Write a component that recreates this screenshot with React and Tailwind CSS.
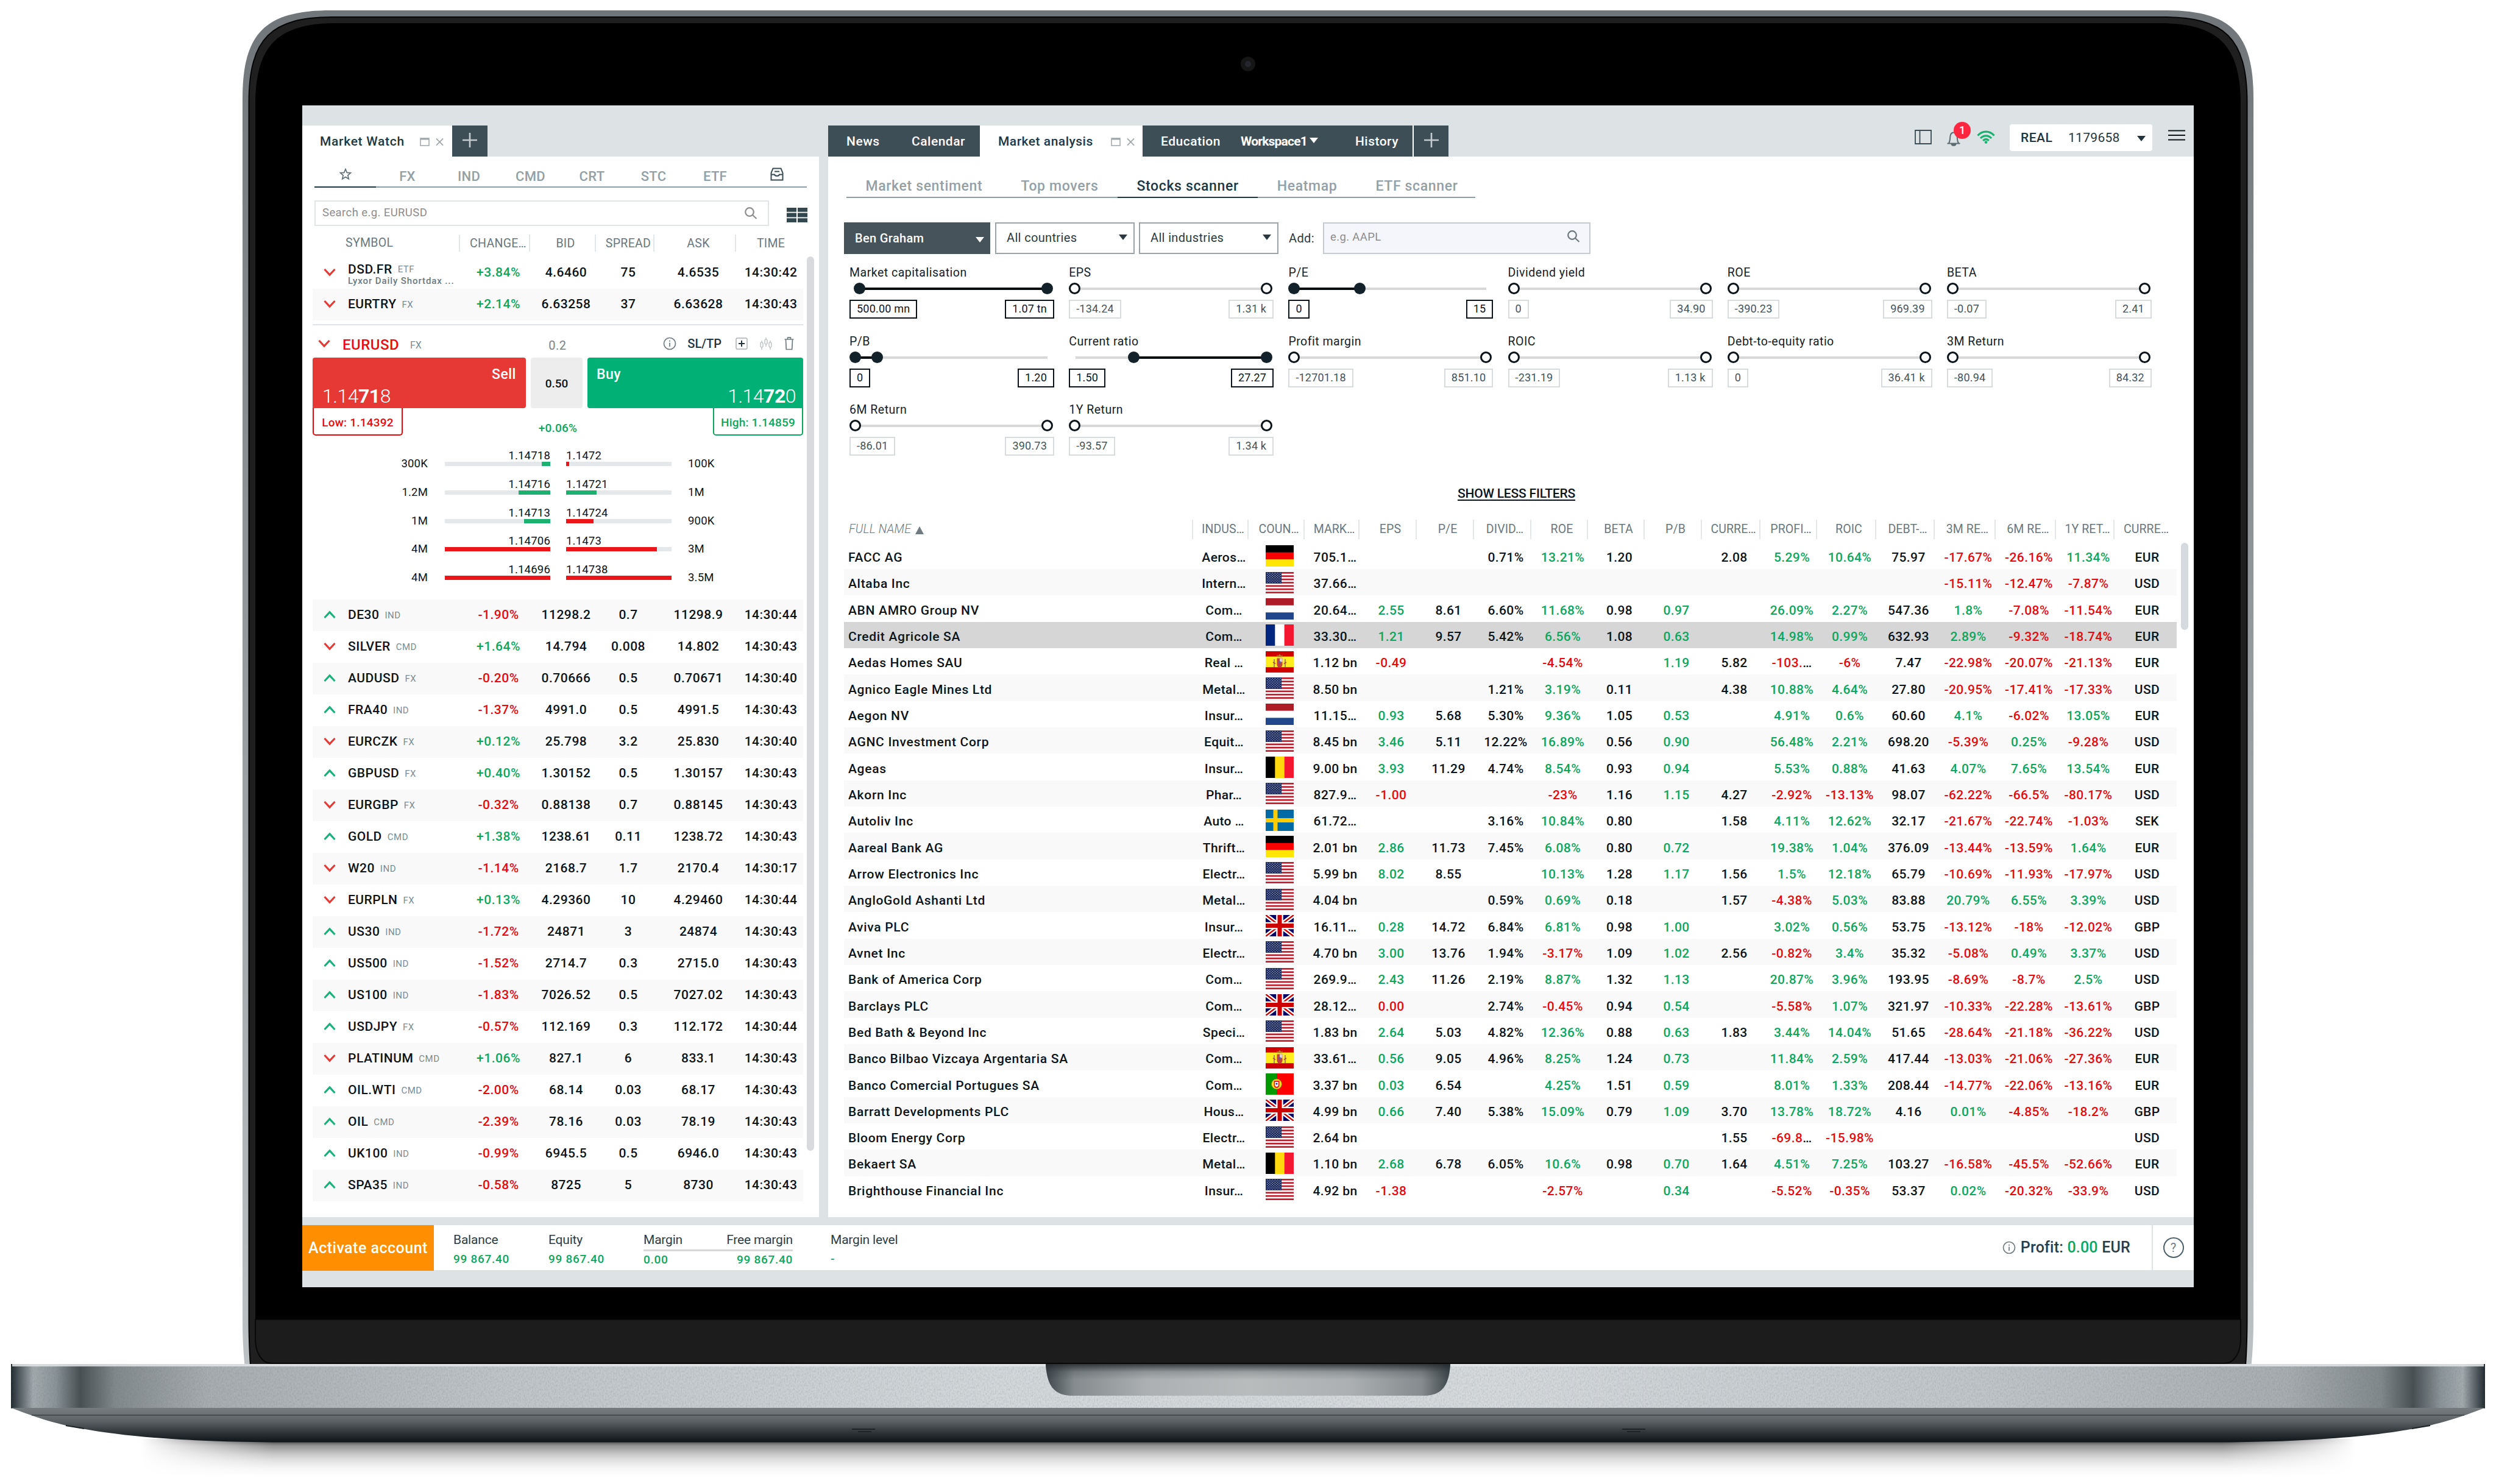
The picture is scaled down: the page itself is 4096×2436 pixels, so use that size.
const symbols = [
  ["up", "DE30", "IND", "-1.90%", "11298.2", "0.7", "11298.9", "14:30:44"],
  ["down", "SILVER", "CMD", "+1.64%", "14.794", "0.008", "14.802", "14:30:43"],
  ["up", "AUDUSD", "FX", "-0.20%", "0.70666", "0.5", "0.70671", "14:30:40"],
  ["up", "FRA40", "IND", "-1.37%", "4991.0", "0.5", "4991.5", "14:30:43"],
  ["down", "EURCZK", "FX", "+0.12%", "25.798", "3.2", "25.830", "14:30:40"],
  ["up", "GBPUSD", "FX", "+0.40%", "1.30152", "0.5", "1.30157", "14:30:43"],
  ["down", "EURGBP", "FX", "-0.32%", "0.88138", "0.7", "0.88145", "14:30:43"],
  ["up", "GOLD", "CMD", "+1.38%", "1238.61", "0.11", "1238.72", "14:30:43"],
  ["down", "W20", "IND", "-1.14%", "2168.7", "1.7", "2170.4", "14:30:17"],
  ["down", "EURPLN", "FX", "+0.13%", "4.29360", "10", "4.29460", "14:30:44"],
  ["up", "US30", "IND", "-1.72%", "24871", "3", "24874", "14:30:43"],
  ["up", "US500", "IND", "-1.52%", "2714.7", "0.3", "2715.0", "14:30:43"],
  ["up", "US100", "IND", "-1.83%", "7026.52", "0.5", "7027.02", "14:30:43"],
  ["up", "USDJPY", "FX", "-0.57%", "112.169", "0.3", "112.172", "14:30:44"],
  ["down", "PLATINUM", "CMD", "+1.06%", "827.1", "6", "833.1", "14:30:43"],
  ["up", "OIL.WTI", "CMD", "-2.00%", "68.14", "0.03", "68.17", "14:30:43"],
  ["up", "OIL", "CMD", "-2.39%", "78.16", "0.03", "78.19", "14:30:43"],
  ["up", "UK100", "IND", "-0.99%", "6945.5", "0.5", "6946.0", "14:30:43"],
  ["up", "SPA35", "IND", "-0.58%", "8725", "5", "8730", "14:30:43"],
];

const depth = [
  { bidVol: "300K", bid: "1.14718", bidPct: 8.3, bidGreen: true, ask: "1.1472", askPct: 3, askGreen: false, askVol: "100K" },
  { bidVol: "1.2M", bid: "1.14716", bidPct: 30, bidGreen: true, ask: "1.14721", askPct: 29, askGreen: true, askVol: "1M" },
  { bidVol: "1M", bid: "1.14713", bidPct: 25, bidGreen: true, ask: "1.14724", askPct: 26, askGreen: false, askVol: "900K" },
  { bidVol: "4M", bid: "1.14706", bidPct: 100, bidGreen: false, ask: "1.1473", askPct: 86, askGreen: false, askVol: "3M" },
  { bidVol: "4M", bid: "1.14696", bidPct: 100, bidGreen: false, ask: "1.14738", askPct: 100, askGreen: false, askVol: "3.5M" },
];

const filters = [
  { label: "Market capitalisation", min: "500.00 mn", max: "1.07 tn", low: 16.7, high: 324.5, active: true },
  { label: "EPS", min: "-134.24", max: "1.31 k", low: 9.5, high: 324.5 },
  { label: "P/E", min: "0", max: "15", low: 9.5, high: 117.5, active: true },
  { label: "Dividend yield", min: "0", max: "34.90", low: 9.5, high: 324.5 },
  { label: "ROE", min: "-390.23", max: "969.39", low: 9.5, high: 324.5 },
  { label: "BETA", min: "-0.07", max: "2.41", low: 9.5, high: 324.5 },
  { label: "P/B", min: "0", max: "1.20", low: 9.5, high: 45, active: true },
  { label: "Current ratio", min: "1.50", max: "27.27", low: 106.5, high: 324.5, active: true },
  { label: "Profit margin", min: "-12701.18", max: "851.10", low: 9.5, high: 324.5 },
  { label: "ROIC", min: "-231.19", max: "1.13 k", low: 9.5, high: 324.5 },
  { label: "Debt-to-equity ratio", min: "0", max: "36.41 k", low: 9.5, high: 324.5 },
  { label: "3M Return", min: "-80.94", max: "84.32", low: 9.5, high: 324.5 },
  { label: "6M Return", min: "-86.01", max: "390.73", low: 9.5, high: 324.5 },
  { label: "1Y Return", min: "-93.57", max: "1.34 k", low: 9.5, high: 324.5 },
];

const stockHeaders = ["INDUS…", "COUN…", "MARK…", "EPS", "P/E", "DIVID…", "ROE", "BETA", "P/B", "CURRE…", "PROFI…", "ROIC", "DEBT-…", "3M RE…", "6M RE…", "1Y RET…", "CURRE…"];

// name, industry, country, cap, eps, p/e, dividend, roe, beta, p/b, current, profit, roic, debt, 3m, 6m, 1y, currency
const stocks = [
  ["FACC AG", "Aeros…", "de", "705.1…", "", "", "0.71%", "13.21%", "1.20", "", "2.08", "5.29%", "10.64%", "75.97", "-17.67%", "-26.16%", "11.34%", "EUR"],
  ["Altaba Inc", "Intern…", "us", "37.66…", "", "", "", "", "", "", "", "", "", "", "-15.11%", "-12.47%", "-7.87%", "USD"],
  ["ABN AMRO Group NV", "Com…", "nl", "20.64…", "2.55", "8.61", "6.60%", "11.68%", "0.98", "0.97", "", "26.09%", "2.27%", "547.36", "1.8%", "-7.08%", "-11.54%", "EUR"],
  ["Credit Agricole SA", "Com…", "fr", "33.30…", "1.21", "9.57", "5.42%", "6.56%", "1.08", "0.63", "", "14.98%", "0.99%", "632.93", "2.89%", "-9.32%", "-18.74%", "EUR"],
  ["Aedas Homes SAU", "Real …", "es", "1.12 bn", "-0.49", "", "", "-4.54%", "", "1.19", "5.82", "-103.…", "-6%", "7.47", "-22.98%", "-20.07%", "-21.13%", "EUR"],
  ["Agnico Eagle Mines Ltd", "Metal…", "us", "8.50 bn", "", "", "1.21%", "3.19%", "0.11", "", "4.38", "10.88%", "4.64%", "27.80", "-20.95%", "-17.41%", "-17.33%", "USD"],
  ["Aegon NV", "Insur…", "nl", "11.15…", "0.93", "5.68", "5.30%", "9.36%", "1.05", "0.53", "", "4.91%", "0.6%", "60.60", "4.1%", "-6.02%", "13.05%", "EUR"],
  ["AGNC Investment Corp", "Equit…", "us", "8.45 bn", "3.46", "5.11", "12.22%", "16.89%", "0.56", "0.90", "", "56.48%", "2.21%", "698.20", "-5.39%", "0.25%", "-9.28%", "USD"],
  ["Ageas", "Insur…", "be", "9.00 bn", "3.93", "11.29", "4.74%", "8.54%", "0.93", "0.94", "", "5.53%", "0.88%", "41.63", "4.07%", "7.65%", "13.54%", "EUR"],
  ["Akorn Inc", "Phar…", "us", "827.9…", "-1.00", "", "", "-23%", "1.16", "1.15", "4.27", "-2.92%", "-13.13%", "98.07", "-62.22%", "-66.5%", "-80.17%", "USD"],
  ["Autoliv Inc", "Auto …", "se", "61.72…", "", "", "3.16%", "10.84%", "0.80", "", "1.58", "4.11%", "12.62%", "32.17", "-21.67%", "-22.74%", "-1.03%", "SEK"],
  ["Aareal Bank AG", "Thrift…", "de", "2.01 bn", "2.86", "11.73", "7.45%", "6.08%", "0.80", "0.72", "", "19.38%", "1.04%", "376.09", "-13.44%", "-13.59%", "1.64%", "EUR"],
  ["Arrow Electronics Inc", "Electr…", "us", "5.99 bn", "8.02", "8.55", "", "10.13%", "1.28", "1.17", "1.56", "1.5%", "12.18%", "65.79", "-10.69%", "-11.93%", "-17.97%", "USD"],
  ["AngloGold Ashanti Ltd", "Metal…", "us", "4.04 bn", "", "", "0.59%", "0.69%", "0.18", "", "1.57", "-4.38%", "5.03%", "83.88", "20.79%", "6.55%", "3.39%", "USD"],
  ["Aviva PLC", "Insur…", "gb", "16.11…", "0.28", "14.72", "6.84%", "6.81%", "0.98", "1.00", "", "3.02%", "0.56%", "53.75", "-13.12%", "-18%", "-12.02%", "GBP"],
  ["Avnet Inc", "Electr…", "us", "4.70 bn", "3.00", "13.76", "1.94%", "-3.17%", "1.09", "1.02", "2.56", "-0.82%", "3.4%", "35.32", "-5.08%", "0.49%", "3.37%", "USD"],
  ["Bank of America Corp", "Com…", "us", "269.9…", "2.43", "11.26", "2.19%", "8.87%", "1.32", "1.13", "", "20.87%", "3.96%", "193.95", "-8.69%", "-8.7%", "2.5%", "USD"],
  ["Barclays PLC", "Com…", "gb", "28.12…", "0.00", "", "2.74%", "-0.45%", "0.94", "0.54", "", "-5.58%", "1.07%", "321.97", "-10.33%", "-22.28%", "-13.61%", "GBP"],
  ["Bed Bath & Beyond Inc", "Speci…", "us", "1.83 bn", "2.64", "5.03", "4.82%", "12.36%", "0.88", "0.63", "1.83", "3.44%", "14.04%", "51.65", "-28.64%", "-21.18%", "-36.22%", "USD"],
  ["Banco Bilbao Vizcaya Argentaria SA", "Com…", "es", "33.61…", "0.56", "9.05", "4.96%", "8.25%", "1.24", "0.73", "", "11.84%", "2.59%", "417.44", "-13.03%", "-21.06%", "-27.36%", "EUR"],
  ["Banco Comercial Portugues SA", "Com…", "pt", "3.37 bn", "0.03", "6.54", "", "4.25%", "1.51", "0.59", "", "8.01%", "1.33%", "208.44", "-14.77%", "-22.06%", "-13.16%", "EUR"],
  ["Barratt Developments PLC", "Hous…", "gb", "4.99 bn", "0.66", "7.40", "5.38%", "15.09%", "0.79", "1.09", "3.70", "13.78%", "18.72%", "4.16", "0.01%", "-4.85%", "-18.2%", "GBP"],
  ["Bloom Energy Corp", "Electr…", "us", "2.64 bn", "", "", "", "", "", "", "1.55", "-69.8…", "-15.98%", "", "", "", "", "USD"],
  ["Bekaert SA", "Metal…", "be", "1.10 bn", "2.68", "6.78", "6.05%", "10.6%", "0.98", "0.70", "1.64", "4.51%", "7.25%", "103.27", "-16.58%", "-45.5%", "-52.66%", "EUR"],
  ["Brighthouse Financial Inc", "Insur…", "us", "4.92 bn", "-1.38", "", "", "-2.57%", "", "0.34", "", "-5.52%", "-0.35%", "53.37", "0.02%", "-20.32%", "-33.9%", "USD"],
];

// columns of a stock row whose figures are red or green
const signedColumns = [4, 7, 9, 11, 12, 14, 15, 16];

const FlagArt = ({ code }) => {
  if (code === "de") {
    return (
      <>
        <rect width="46" height="12" fill="#000" />
        <rect y="11.7" width="46" height="12" fill="#f00" />
        <rect y="23.3" width="46" height="11.7" fill="#ffe600" />
      </>
    );
  }
  if (code === "nl") {
    return (
      <>
        <rect width="46" height="35" fill="#fff" />
        <rect width="46" height="11.7" fill="#ae1c28" />
        <rect y="23.3" width="46" height="11.7" fill="#21468b" />
      </>
    );
  }
  if (code === "fr" || code === "be") {
    const [a, b] = code === "fr" ? ["#00267f", "#fff"] : ["#000", "#ffd90c"];
    return (
      <>
        <rect width="16" height="35" fill={a} />
        <rect x="15.3" width="15.4" height="35" fill={b} />
        <rect x="30.7" width="15.3" height="35" fill="#f31830" />
      </>
    );
  }
  if (code === "se") {
    return (
      <>
        <rect width="46" height="35" fill="#006aa7" />
        <rect x="12.5" width="7" height="35" fill="#fecc00" />
        <rect y="14" width="46" height="7" fill="#fecc00" />
      </>
    );
  }
  if (code === "es") {
    return (
      <>
        <rect width="46" height="35" fill="#d00000" />
        <rect y="8.7" width="46" height="17.5" fill="#ffed1f" />
        <path d="M19 9.500h8l1-3.500-2.500 1.500L23 4.500l-2.500 3L18 6z" fill="#b8772a" />
        <path d="M18.500 11.500h9v10.500a4.500 4.500 0 0 1-9 0z" fill="#c3403f" />
        <path d="M23 11.500h4.500v6H23z" fill="#d9cfd6" />
        <circle cx="23" cy="18" r="1.800" fill="#4a63b8" />
        <path d="M13 13h2v13h-2zM31 13h2v13h-2z" fill="#a98a5a" />
        <path d="M12 18l4 2.500M34 18l-4 2.500" stroke="#c3403f" strokeWidth="1.500" />
      </>
    );
  }
  if (code === "pt") {
    return (
      <>
        <rect width="46" height="35" fill="#f00" />
        <rect width="18" height="35" fill="#090" />
        <circle cx="18" cy="17.500" r="8.500" fill="#f5e21c" stroke="#7d7a10" strokeWidth="1" />
        <path d="M13.500 12h9v7.500a4.500 4.500 0 0 1-9 0z" fill="#f01c1c" />
        <path d="M15.300 14h5.400v5a2.700 2.700 0 0 1-5.400 0z" fill="#fff" />
        <circle cx="18" cy="17" r="1.500" fill="#1a2e9a" />
      </>
    );
  }
  if (code === "gb") {
    return (
      <>
        <rect width="46" height="35" fill="#006" />
        <path d="M0 0L46 35M46 0L0 35" stroke="#fff" strokeWidth="7" />
        <path d="M0 0L46 35M46 0L0 35" stroke="#c00" strokeWidth="2.400" />
        <path d="M23 0V35M0 17.500H46" stroke="#fff" strokeWidth="11.500" />
        <path d="M23 0V35M0 17.500H46" stroke="#c00" strokeWidth="7" />
      </>
    );
  }
  return (
    <>
      <rect width="46" height="35" fill="#fff" />
      {[0, 1, 2, 3, 4, 5, 6].map((i) => (
        <rect key={i} y={i * 5.38} width="46" height="2.69" fill="#bd1d2c" />
      ))}
      <rect width="26" height="18.800" fill="#1d2c63" />
      {[0, 1, 2, 3, 4, 5, 6, 7, 8].map((r) => (
        <path
          key={r}
          d={r % 2 ? `M4.200 ${1.9 + r * 1.88}H24` : `M2 ${1.9 + r * 1.88}H25`}
          stroke="#c5cbe0"
          strokeWidth="1.100"
          strokeDasharray="1.100 3.200"
        />
      ))}
    </>
  );
};

const Flag = ({ code }) => (
  <svg viewBox="0 0 46 35" className="w-[46px] h-[35px] block">
    <FlagArt code={code} />
  </svg>
);

const Chevron = ({ dir }) => (
  <svg viewBox="0 0 20 14" className="w-[20px] h-[14px] -mt-[2px]" fill="none" strokeWidth="3.200">
    {dir === "up" ? <path d="M1.500 12L10 2.800l8.500 9.200" stroke="#17b27a" /> : <path d="M1.500 2L10 11.200 18.500 2" stroke="#e53a36" />}
  </svg>
);

const Magnifier = () => (
  <svg viewBox="0 0 24 22" className="w-[24px] h-[22px]" fill="none" stroke="currentColor" strokeWidth="2.200">
    <circle cx="10" cy="9" r="6.800" />
    <path d="M15 14l6.500 6" />
  </svg>
);

const WindowControls = () => (
  <div className="flex items-center gap-[10px] text-[#9fa6aa]">
    <svg viewBox="0 0 16 14" className="w-[16px] h-[14px]" fill="none" stroke="currentColor" strokeWidth="1.500">
      <rect x="1" y="1" width="14" height="12" />
      <path d="M1 2.200h14" strokeWidth="2.500" />
    </svg>
    <svg viewBox="0 0 14 14" className="w-[13px] h-[14px]" fill="none" stroke="currentColor" strokeWidth="1.800">
      <path d="M1 1l12 12M13 1L1 13" />
    </svg>
  </div>
);

const AddTab = ({ className }) => (
  <div className={`bg-[#3e4e57] h-[51px] flex justify-center pt-[12px] ${className}`}>
    <svg viewBox="0 0 24 24" className="w-[24px] h-[24px]" stroke="#c5cccf" strokeWidth="2.600">
      <path d="M12 0v24M0 12h24" />
    </svg>
  </div>
);

const Caret = ({ className }) => (
  <svg viewBox="0 0 14 9" className={`w-[14px] h-[9px] ${className}`} fill="currentColor">
    <path d="M0 0h14L7 9z" />
  </svg>
);

const InfoIcon = () => (
  <svg viewBox="0 0 22 22" className="w-[22px] h-[22px]" fill="none" stroke="#6f7c82" strokeWidth="1.700">
    <circle cx="11" cy="11" r="9.500" />
    <path d="M11 9.500v6.500M11 5.800v2" />
  </svg>
);

const SymbolRow = ({ row, striped }) => {
  const [dir, name, type, change, bid, spread, ask, time] = row;
  return (
    <div className={`w-[805px] h-[52px] grid grid-cols-[255px_100px_122px_82px_148px_98px] items-center text-center text-[21px] font-medium tracking-[0.5px] ${striped ? "bg-[#f9f9f9]" : ""}`}>
      <div className="flex items-center pl-[18px]">
        <Chevron dir={dir} />
        <span className="ml-[20px]">{name}</span>
        <span className="ml-[9px] mt-px text-[15px] font-normal text-[#7b8c94]">{type}</span>
      </div>
      <div className={change[0] === "-" ? "text-[#e8090e]" : "text-[#0ca75e]"}>{change}</div>
      <div>{bid}</div>
      <div>{spread}</div>
      <div>{ask}</div>
      <div className="pr-[8px]">{time}</div>
    </div>
  );
};

const DepthRow = ({ row }) => (
  <div className="flex h-[46.8px] text-[18.5px] tracking-[0.2px] leading-[20px]">
    <div className="w-[189px] pt-[13px] text-right">{row.bidVol}</div>
    <div className="w-[173px] ml-[28px]">
      <div className="h-[20px] text-right">{row.bid}</div>
      <div className="h-[7px] bg-[#e4e8eb] flex justify-end">
        <div className={`h-full ${row.bidGreen ? "bg-[#1cb171]" : "bg-[#ec151a]"}`} style={{ width: `${row.bidPct}%` }} />
      </div>
    </div>
    <div className="w-[173px] ml-[26px]">
      <div className="h-[20px]">{row.ask}</div>
      <div className="h-[7px] bg-[#e4e8eb]">
        <div className={`h-full ${row.askGreen ? "bg-[#1cb171]" : "bg-[#ec151a]"}`} style={{ width: `${row.askPct}%` }} />
      </div>
    </div>
    <div className="ml-[27px] pt-[13px]">{row.askVol}</div>
  </div>
);

const OrderTicket = () => (
  <div className="w-[805px]">
    <div className="mt-[6px] h-[2px] bg-[#dfe4ea]" />
    <div className="flex items-center h-[53px] pt-[9px] pl-[9px]">
      <Chevron dir="down" />
      <span className="ml-[20px] mt-px w-[111px] text-[24px] font-medium tracking-[0.5px] text-[#ee0a0f]">EURUSD</span>
      <span className="mt-[4px] w-[204px] text-[16px] text-[#7b8c94]">FX</span>
      <span className="mt-[4px] w-[76px] text-center text-[20px] tracking-[0.5px] text-[#788489]">0.2</span>
      <div className="ml-auto -mt-[2px] pr-[15px] flex items-center">
        <InfoIcon />
        <span className="ml-[18px] text-[20px] font-medium text-[#22343d]">SL/TP</span>
        <svg viewBox="0 0 20 20" className="ml-[23px] w-[20px] h-[20px]" fill="none">
          <rect x="1" y="1" width="18" height="18" rx="2" stroke="#aab3b7" strokeWidth="1.500" />
          <path d="M10 5v10M5 10h10" stroke="#22343d" strokeWidth="2" />
        </svg>
        <svg viewBox="0 0 22 22" className="ml-[19px] w-[22px] h-[22px]" fill="none" stroke="#c0c6c9" strokeWidth="1.500">
          <path d="M4 6v3M4 17v4M11 1v3M11 12v4M18 6v3M18 17v4" />
          <rect x="2" y="9" width="4" height="8" rx="2" />
          <rect x="9" y="4" width="4" height="8" rx="2" />
          <rect x="16" y="9" width="4" height="8" rx="2" />
        </svg>
        <svg viewBox="0 0 16 22" className="ml-[19px] w-[16px] h-[22px]" fill="none" stroke="#6f7c82" strokeWidth="1.700">
          <path d="M0.500 4h15M5.500 3.500V1.200h5v2.300M2.500 4.500l.8 16h9.400l.8-16" />
        </svg>
      </div>
    </div>
    <div className="flex gap-[8px] h-[83px]">
      <div className="w-[350px] bg-[#e63835] rounded-t-[4px] rounded-br-[4px] text-white px-[16px] pt-[12px]">
        <div className="h-[30px] leading-[32px] text-right text-[23px] tracking-[0.5px] font-medium">Sell</div>
        <div className="h-[38px] leading-[42px] text-[32px] font-light tracking-[-0.5px]">1.14<b className="font-bold">71</b>8</div>
      </div>
      <div className="w-[85px] bg-[#ededed] rounded-[4px] flex items-center justify-center pt-[4px] text-[19px] font-medium">0.50</div>
      <div className="w-[354px] bg-[#00b074] rounded-t-[4px] rounded-bl-[4px] text-white px-[12px] pt-[12px]">
        <div className="h-[30px] leading-[32px] text-[23px] tracking-[0.5px] font-medium pl-[3px]">Buy</div>
        <div className="h-[38px] leading-[42px] text-right text-[32px] font-light tracking-[-0.5px]">1.14<b className="font-bold">72</b>0</div>
      </div>
    </div>
    <div className="flex justify-between h-[45px] text-[19px] font-medium tracking-[0.2px]">
      <div className="w-[148px] border-2 border-t-0 border-[#e8090e] rounded-b-[5px] text-[#e8090e] flex items-center justify-center pt-[6px]">Low: 1.14392</div>
      <div className="pt-[19px] text-[#0ca75e]">+0.06%</div>
      <div className="w-[148px] border-2 border-t-0 border-[#0ca75e] rounded-b-[5px] text-[#0ca75e] flex items-center justify-center pt-[6px]">High: 1.14859</div>
    </div>
    <div className="mt-[23px] mb-[12px]">
      {depth.map((row) => (
        <DepthRow key={row.bid} row={row} />
      ))}
    </div>
  </div>
);

const MarketWatch = () => (
  <section className="w-[848px] flex flex-col">
    <div className="flex pt-[33px]">
      <div className="bg-white w-[246px] h-[51px] flex items-center pt-[3px] pl-[29px]">
        <span className="w-[164px] text-[21px] font-medium tracking-[0.7px] text-[#213844]">Market Watch</span>
        <WindowControls />
      </div>
      <AddTab className="w-[58px]" />
    </div>
    <div className="bg-white h-[1741px]">
      <div className="mx-[20px] w-[808px] h-[51px] border-b-2 border-[#8ea0a7] grid grid-cols-8 text-center text-[22px] font-medium tracking-[0.3px] text-[#93a0a6]">
        <div className="border-b-2 border-[#1d3743] h-[51px] flex justify-center pt-[18px]">
          <svg viewBox="0 0 22 22" className="w-[20px] h-[22px]" fill="none" stroke="#5d6e77" strokeWidth="1.800">
            <path d="M11 1.800l2.600 6.300 6.700.5-5.100 4.400 1.600 6.600L11 16l-5.800 3.600 1.600-6.600L1.700 8.600l6.700-.5z" />
          </svg>
        </div>
        {["FX", "IND", "CMD", "CRT", "STC", "ETF"].map((name) => (
          <div key={name} className="pt-[16px] pl-[2px]">{name}</div>
        ))}
        <div className="flex justify-center pt-[18px] pl-[3px]">
          <svg viewBox="0 0 22 22" className="w-[22px] h-[22px]" fill="none" stroke="#3b4c55" strokeWidth="2">
            <path d="M4.500 1.500h13L20.500 9v11.500h-19V9zM1.500 11.500h5.500c.5 3 7.500 3 8 0h5.500M7 6.500h8" />
          </svg>
        </div>
      </div>
      <div className="flex items-center mt-[21px] ml-[20px]">
        <div className="w-[746px] h-[42px] border-2 border-[#e2e5e7] flex items-center justify-between pl-[11px] pr-[16px] text-[18.5px] tracking-[0.4px] text-[#8c8c8c]">
          <span>Search e.g. EURUSD</span>
          <Magnifier />
        </div>
        <svg viewBox="0 0 34 24" className="ml-[29px] mt-[6px] w-[34px] h-[24px]" fill="#33474f">
          <path d="M0 0h16v6.800H0zM18 0h16v6.800H18zM0 8.600h16v6.800H0zM18 8.600h16v6.800H18zM0 17.200h16V24H0zM18 17.200h16V24H18z" />
        </svg>
      </div>
      <div className="mt-[13px] ml-[17px] w-[805px] h-[28px] grid grid-cols-[240px_115px_108px_96px_134px_112px] items-center text-center text-[19.5px] tracking-[0.3px] leading-[30px] text-[#69787f]">
        <div className="text-left pl-[54px]">SYMBOL</div>
        <div className="h-[28px] border-l-2 border-[#e3e7ea] pl-[12px]">CHANGE…</div>
        <div className="h-[28px] border-l-2 border-[#e3e7ea] pl-[10px]">BID</div>
        <div className="h-[28px] border-l-2 border-[#e3e7ea] pl-[12px]">SPREAD</div>
        <div className="h-[28px] border-l-2 border-[#e3e7ea] pl-[12px]">ASK</div>
        <div className="h-[28px] border-l-2 border-[#e3e7ea] pl-[4px]">TIME</div>
      </div>
      <div className="flex mt-[9px] ml-[17px]">
        <div>
          <div className="w-[805px] h-[53px] grid grid-cols-[255px_100px_122px_82px_148px_98px] items-center text-center text-[21px] font-medium tracking-[0.5px]">
            <div className="flex items-center pl-[18px]">
              <Chevron dir="down" />
              <div className="ml-[20px] text-left leading-none pt-[5px]">
                <div className="flex items-center">
                  DSD.FR <span className="ml-[9px] mt-px text-[15px] font-normal text-[#7b8c94]">ETF</span>
                </div>
                <div className="text-[15px] tracking-[0.9px] leading-[16px] whitespace-nowrap text-[#6b7a82]">Lyxor Daily Shortdax ...</div>
              </div>
            </div>
            <div className="text-[#0ca75e]">+3.84%</div>
            <div>4.6460</div>
            <div>75</div>
            <div>4.6535</div>
            <div className="pr-[8px]">14:30:42</div>
          </div>
          <SymbolRow row={["down", "EURTRY", "FX", "+2.14%", "6.63258", "37", "6.63628", "14:30:43"]} striped />
          <OrderTicket />
          {symbols.map((row, i) => (
            <SymbolRow key={row[1]} row={row} striped={i % 2 === 0} />
          ))}
        </div>
        <div className="ml-[6px] w-[12px] h-[1468px] rounded-full bg-[#d8dadd]" />
      </div>
    </div>
  </section>
);

const RangeFilter = ({ label, min, max, low, high, active }) => {
  const knob = active ? "bg-[#13212b]" : "bg-white border-[3.500px] border-[#0b141b]";
  const box = active ? "border-[#0b141b] text-[#0b141b]" : "border-[#d9dcde] text-[#44535b]";
  return (
    <div className="w-[336px] h-[112.600px]">
      <div className="h-[24px] leading-[22px] text-[19.5px] tracking-[0.5px]">{label}</div>
      <div className="relative h-[24px]">
        <div className="absolute left-[11px] top-[11px] w-[314px] h-[4px] bg-[#d8d8d8]" />
        {active && <div className="absolute top-[11px] h-[4px] bg-[#04090d]" style={{ left: low, width: high - low }} />}
        <div className={`absolute top-[3px] w-[19px] h-[19px] rounded-full ${knob}`} style={{ left: low - 9.5 }} />
        <div className={`absolute top-[3px] w-[19px] h-[19px] rounded-full ${knob}`} style={{ left: high - 9.5 }} />
      </div>
      <div className="mt-[7px] flex justify-between text-[18px] tracking-[0.2px] leading-[26px]">
        <div className={`h-[31px] border-2 px-[10px] ${box}`}>{min}</div>
        <div className={`h-[31px] border-2 px-[10px] ${box}`}>{max}</div>
      </div>
    </div>
  );
};

const StockCell = ({ value, signed }) => {
  if (!signed) return <div>{value}</div>;
  const color = value[0] === "-" || value === "0.00" ? "text-[#e8090e]" : "text-[#0ca75e]";
  return (
    <div>
      <span className={color}>{value.replace("…", "")}</span>
      {value.endsWith("…") && "…"}
    </div>
  );
};

const StockTable = () => (
  <div className="ml-[26px] mt-[28px]">
    <div className="w-[2187px] h-[28px] grid grid-cols-[571px_91px_92px_90px_94px_94px_94px_93px_93px_94px_96px_93px_97px_96px_100px_99px_96px_104px] text-center text-[19.5px] tracking-[0.1px] leading-[32px] whitespace-nowrap text-[#69787f]">
      <div className="text-left pl-[8px] flex items-center gap-[7px] italic font-light tracking-[0.2px]">
        FULL NAME
        <svg viewBox="0 0 14 13" className="w-[14px] h-[13px] mt-[3px]" fill="#707c82">
          <path d="M7 0l7 13H0z" />
        </svg>
      </div>
      {stockHeaders.map((name, i) => (
        <div key={i} className={`border-l-2 border-[#e3e7ea] flex justify-center ${i === 16 ? "pl-[2px]" : "pl-[9px]"}`}>{name}</div>
      ))}
    </div>
    <div className="flex mt-[10px]">
      <div>
        {stocks.map((row, i) => (
          <div
            key={row[0]}
            className={`w-[2187px] h-[43.340px] pt-[5px] grid grid-cols-[578px_91px_92px_90px_94px_94px_94px_93px_93px_94px_96px_93px_97px_96px_100px_99px_96px_97px] items-center text-center text-[21px] leading-[30px] font-medium tracking-[0.4px] whitespace-nowrap ${i === 3 ? "bg-[#d6d6d6]" : i % 2 ? "bg-[#f9f9f9]" : ""}`}
          >
            {row.map((value, c) => {
              if (c === 0) return <div key={c} className="text-left pl-[7px] tracking-[0.7px]">{value}</div>;
              if (c === 2) return <div key={c} className="flex justify-center -mt-[4px]"><Flag code={value} /></div>;
              return <StockCell key={c} value={value} signed={signedColumns.includes(c) && value !== ""} />;
            })}
          </div>
        ))}
      </div>
      <div className="ml-[7px] w-[12px] h-[143px] rounded-full bg-[#d5dade]" />
    </div>
  </div>
);

const TopBar = () => (
  <div className="flex pt-[33px] text-[21px] font-medium tracking-[0.5px] text-white whitespace-nowrap">
    <div className="bg-[#3e4e57] w-[249px] h-[51px] flex items-center pt-[3px]">
      <span className="w-[107px] ml-[30px]">News</span>
      <span>Calendar</span>
    </div>
    <div className="bg-white w-[267px] h-[51px] flex items-center pt-[3px] pl-[30px] text-[#213844]">
      <span className="w-[185px]">Market analysis</span>
      <WindowControls />
    </div>
    <div className="bg-[#3e4e57] w-[443px] h-[51px] flex items-center pt-[3px]">
      <span className="w-[131px] ml-[30px]">Education</span>
      <span className="font-bold tracking-[-0.8px]">Workspace1</span>
      <Caret className="ml-[4px] -mt-[6px]" />
      <span className="ml-auto mr-[23px]">History</span>
    </div>
    <AddTab className="w-[59px] border-l-2 border-white" />
    <div className="ml-auto h-[48px] -mt-[4px] flex items-center text-[#22343d]">
      <svg viewBox="0 0 28 24" className="w-[28px] h-[24px] -mt-[2px]" fill="none" stroke="#3b4c55" strokeWidth="1.800">
        <path d="M1 1h26v22H1zM8.500 1v22" />
      </svg>
      <div className="relative ml-[24px]">
        <svg viewBox="0 0 24 26" className="w-[24px] h-[26px] mt-[2px]" fill="none" stroke="#5d6b72" strokeWidth="2">
          <path d="M1.500 21.500h21M4 21c2-3 2-5 2.200-10C6.500 6 8.500 3.500 12 3.500s5.500 2.500 5.800 7.500c.2 5 .2 7 2.200 10" />
          <path d="M8.500 22.500c.5 3 6.500 3 7 0z" fill="#5d6b72" />
        </svg>
        <div className="absolute left-[12px] -top-[12px] w-[28px] h-[28px] rounded-full bg-[#ff2740] text-white text-[18px] leading-[28px] text-center tracking-normal">1</div>
      </div>
      <svg viewBox="0 0 30 22" className="ml-[26px] -mt-[2px] w-[30px] h-[22px]" fill="none" stroke="#17b26f" strokeWidth="3.200">
        <path d="M1.500 8.500c7.500-8.500 19.500-8.500 27 0M6 13c5-5.600 13-5.600 18 0M10.200 16.800c3-3 6.600-3 9.600 0" />
        <circle cx="15" cy="19.500" r="2.300" fill="#17b26f" stroke="none" />
      </svg>
      <div className="ml-[24px] bg-white rounded-[4px] w-[234px] h-[44px] flex items-center pt-[2px] pl-[18px] pr-[11px]">
        <span className="w-[78px]">REAL</span>
        <span className="font-normal tracking-[0.3px]">1179658</span>
        <Caret className="ml-auto" />
      </div>
      <svg viewBox="0 0 28 18" className="ml-[26px] mr-[14px] -mt-[9px] w-[28px] h-[18px]" stroke="#0e1519" strokeWidth="2.200">
        <path d="M0 1.500h28M0 9h28M0 16.500h28" />
      </svg>
    </div>
  </div>
);

const MarketAnalysis = () => (
  <section className="w-[2241px] ml-[15px] flex flex-col">
    <TopBar />
    <div className="bg-white h-[1741px]">
      <div className="ml-[30px] w-[1032px] h-[68px] border-b-2 border-[#8ea0a7] flex text-[23px] font-medium tracking-[0.650px] whitespace-nowrap text-[#93a0a6]">
        {["Market sentiment", "Top movers", "Stocks scanner", "Heatmap", "ETF scanner"].map((name) => (
          <div key={name} className={`h-[68px] pt-[32px] px-[31.500px] ${name === "Stocks scanner" ? "border-b-2 border-[#1d3743] text-[#1d3743]" : ""}`}>{name}</div>
        ))}
      </div>
      <div className="flex mt-[40px] ml-[26px] h-[52px] text-[20px] tracking-[0.350px] text-[#2b3a42]">
        <div className="w-[240px] bg-[#46535b] text-white font-medium flex items-center justify-between pl-[18px] pr-[10px]">
          Ben Graham
          <Caret className="mt-[5px]" />
        </div>
        <div className="w-[229px] ml-[8px] border-2 border-[#99a3a8] flex items-center justify-between pl-[17px] pr-[10px] pb-[2px]">
          All countries
          <Caret className="-mt-[2px]" />
        </div>
        <div className="w-[229px] ml-[7px] border-2 border-[#99a3a8] flex items-center justify-between pl-[17px] pr-[10px] pb-[2px]">
          All industries
          <Caret className="-mt-[2px]" />
        </div>
        <div className="w-[73px] pl-[17px] leading-[52px]">Add:</div>
        <div className="w-[439px] bg-[#f5f6fb] border-2 border-[#c5cbd1] flex items-center justify-between pl-[10px] pr-[14px] pb-[2px] text-[18.500px] text-[#8c8c8c]">
          e.g. AAPL
          <div className="text-[#6b777d] -mt-[4px]"><Magnifier /></div>
        </div>
      </div>
      <div className="mt-[20px] ml-[35px] grid grid-cols-[repeat(6,360.200px)] text-[#14222a]">
        {filters.map((filter) => (
          <RangeFilter key={filter.label} {...filter} />
        ))}
      </div>
      <div className="mt-[21px] h-[29px] leading-[28px] text-center pl-[18px] text-[21px] font-medium tracking-[-0.200px] underline underline-offset-[3px]">SHOW LESS FILTERS</div>
      <StockTable />
    </div>
  </section>
);

const Footer = () => (
  <footer className="h-[74px] bg-white flex text-[#2d3d46]">
    <div className="w-[216px] h-[75px] bg-[#ff8f00] text-white text-[25px] font-medium tracking-[0.5px] flex items-center justify-center pt-[1px] whitespace-nowrap">Activate account</div>
    <div className="ml-[32px] w-[156px] pt-[9px]">
      <div className="text-[21px] tracking-[-0.2px] leading-[30px]">Balance</div>
      <div className="text-[19px] leading-[34px] font-medium tracking-[0.7px] text-[#0ca75e]">99 867.40</div>
    </div>
    <div className="w-[156px] pt-[9px]">
      <div className="text-[21px] tracking-[-0.2px] leading-[30px]">Equity</div>
      <div className="text-[19px] leading-[34px] font-medium tracking-[0.7px] text-[#0ca75e]">99 867.40</div>
    </div>
    <div className="w-[245px] pt-[9px]">
      <div className="flex justify-between border-b-[3px] border-[#d8d8d8] text-[21px] tracking-[-0.2px] leading-[30px] h-[34px]">
        <span>Margin</span>
        <span>Free margin</span>
      </div>
      <div className="flex justify-between text-[19px] leading-[28px] font-medium tracking-[0.7px] text-[#0ca75e]">
        <span>0.00</span>
        <span>99 867.40</span>
      </div>
    </div>
    <div className="ml-[62px] pt-[9px]">
      <div className="text-[21px] tracking-[-0.2px] leading-[30px]">Margin level</div>
      <div className="text-[19px] leading-[34px] font-medium text-[#0ca75e]">-</div>
    </div>
    <div className="ml-auto flex items-center">
      <InfoIcon />
      <div className="ml-[8px] mr-[35px] text-[25px] tracking-[0.200px] font-medium">
        Profit: <span className="text-[#0ca75e]">0.00</span> EUR
      </div>
      <div className="w-[69px] h-[74px] border-l-2 border-[#dde2e5] flex items-center justify-center">
        <div className="w-[34px] h-[34px] rounded-full border-[2.500px] border-[#4d5f69] text-[20px] leading-[30px] text-center text-[#6b7b84]">?</div>
      </div>
    </div>
  </footer>
);

const Laptop = () => (
  <svg viewBox="0 0 4096 2436" className="absolute left-0 top-0 w-[4096px] h-[2436px]">
    <defs>
      <linearGradient id="lid" x1="0" y1="0" x2="0" y2="1">
        <stop offset="0" stopColor="#70767a" />
        <stop offset="1" stopColor="#bcc1c4" />
      </linearGradient>
      <linearGradient id="deck" gradientUnits="userSpaceOnUse" x1="18" y1="0" x2="4078" y2="0">
        <stop offset="0" stopColor="#1f282d" />
        <stop offset="0.004" stopColor="#5a6368" />
        <stop offset="0.009" stopColor="#a3abaf" />
        <stop offset="0.018" stopColor="#8b9498" />
        <stop offset="0.028" stopColor="#474f53" />
        <stop offset="0.042" stopColor="#82898d" />
        <stop offset="0.080" stopColor="#a7adb1" />
        <stop offset="0.200" stopColor="#bfc5c9" />
        <stop offset="0.400" stopColor="#d3d8db" />
        <stop offset="0.600" stopColor="#d6dadd" />
        <stop offset="0.800" stopColor="#bfc5c9" />
        <stop offset="0.920" stopColor="#a7adb1" />
        <stop offset="0.958" stopColor="#82898d" />
        <stop offset="0.971" stopColor="#474f53" />
        <stop offset="0.982" stopColor="#8b9498" />
        <stop offset="0.991" stopColor="#a3abaf" />
        <stop offset="0.996" stopColor="#5a6368" />
        <stop offset="1" stopColor="#1f282d" />
      </linearGradient>
      <linearGradient id="belly" x1="0" y1="0" x2="0" y2="1">
        <stop offset="0" stopColor="#757b7e" />
        <stop offset="0.200" stopColor="#6b7174" />
        <stop offset="0.400" stopColor="#5a6063" />
        <stop offset="0.700" stopColor="#303639" />
        <stop offset="1" stopColor="#0f1417" />
      </linearGradient>
      <linearGradient id="notchX" x1="0" y1="0" x2="1" y2="0">
        <stop offset="0" stopColor="#3d464b" />
        <stop offset="0.070" stopColor="#858b8e" />
        <stop offset="0.250" stopColor="#acb0b2" />
        <stop offset="0.500" stopColor="#b9bcbd" />
        <stop offset="0.750" stopColor="#acb0b2" />
        <stop offset="0.930" stopColor="#858b8e" />
        <stop offset="1" stopColor="#3d464b" />
      </linearGradient>
      <linearGradient id="notchY" x1="0" y1="0" x2="0" y2="1">
        <stop offset="0" stopColor="#20282c" stopOpacity="0.850" />
        <stop offset="0.250" stopColor="#20282c" stopOpacity="0.200" />
        <stop offset="0.500" stopColor="#20282c" stopOpacity="0" />
      </linearGradient>
      <linearGradient id="shadowY" x1="0" y1="0" x2="0" y2="1">
        <stop offset="0" stopColor="#000" stopOpacity="0.850" />
        <stop offset="0.180" stopColor="#000" stopOpacity="0.420" />
        <stop offset="0.400" stopColor="#000" stopOpacity="0.220" />
        <stop offset="0.580" stopColor="#000" stopOpacity="0.110" />
        <stop offset="0.780" stopColor="#000" stopOpacity="0.035" />
        <stop offset="1" stopColor="#000" stopOpacity="0" />
      </linearGradient>
      <linearGradient id="shadowX" x1="0" y1="0" x2="1" y2="0">
        <stop offset="0" stopColor="#000" />
        <stop offset="0.060" stopColor="#fff" />
        <stop offset="0.940" stopColor="#fff" />
        <stop offset="1" stopColor="#000" />
      </linearGradient>
      <mask id="shadowMask">
        <rect x="230" y="2340" width="3636" height="96" fill="url(#shadowX)" />
      </mask>
      <filter id="grain" x="0" y="0" width="1" height="1">
        <feTurbulence type="fractalNoise" baseFrequency="0.450 0.300" numOctaves="2" seed="4" />
        <feColorMatrix values="0 0 0 0 0.1  0 0 0 0 0.12  0 0 0 0 0.13  1.6 0 0 0 -0.6" />
      </filter>
    </defs>
    <rect x="230" y="2362" width="3636" height="62" fill="url(#shadowY)" mask="url(#shadowMask)" />
    <path d="M401.500 2241C399 2215 398 2195 398 2160V162C398 54 435 17 543 17H3553C3661 17 3698 54 3698 162V2160C3698 2195 3697 2215 3694.500 2241Z" fill="url(#lid)" />
    <path d="M411 2241C409 2215 408.500 2195 408.500 2160V168C408.500 62 446 28 546 28H3550C3650 28 3687.500 62 3687.500 168V2160C3687.500 2195 3687 2215 3685 2241Z" fill="#1f1f1f" stroke="#050505" strokeWidth="2" />
    <path d="M419 2166V172C419 74 456 38 552 38H3544C3640 38 3677 74 3677 172V2166Z" fill="#000" />
    <path d="M419 2166H3677V2198C3677 2218 3668 2238 3650 2238H446C428 2238 419 2218 419 2198Z" fill="#1c1c1c" stroke="#090909" strokeWidth="2" />
    <circle cx="2048" cy="105" r="12" fill="#161616" />
    <circle cx="2048" cy="105" r="5" fill="#24262e" />
    <rect x="18" y="2239" width="4060" height="73" fill="url(#deck)" />
    <rect x="18" y="2239" width="4060" height="73" filter="url(#grain)" opacity="0.220" />
    <rect x="20" y="2239" width="4056" height="4" fill="#e3e6e8" opacity="0.850" />
    <path d="M1716 2239H2380C2378 2270 2370 2291 2336 2291H1760C1726 2291 1718 2270 1716 2239Z" fill="url(#notchX)" />
    <path d="M1716 2239H2380C2378 2270 2370 2291 2336 2291H1760C1726 2291 1718 2270 1716 2239Z" fill="url(#notchY)" />
    <path d="M18 2311H4078C4046 2323 4010 2337 3956 2346C3896 2357 3796 2367 3636 2367.500H460C300 2367 200 2357 140 2346C86 2337 50 2323 18 2311Z" fill="url(#belly)" />
    <path d="M52 2323H4044" stroke="#3b4043" strokeWidth="1.500" />
    <path d="M1398 2346h38M1408 2350h22M2662 2346h38M2670 2350h22M108 2340l30 5M3988 2340l-30 5" stroke="#1d2326" strokeWidth="2" />
  </svg>
);

export default function App() {
  return (
    <div className="relative w-[4096px] h-[2436px] overflow-hidden bg-white pt-[173px] pl-[496px] font-['Roboto'] text-[#0b1419]">
      <Laptop />
      <div className="relative w-[3104px] h-[1940px] bg-[#dde2e5] overflow-hidden">
        <main className="flex h-[1838px]">
          <MarketWatch />
          <MarketAnalysis />
        </main>
        <Footer />
      </div>
    </div>
  );
}
